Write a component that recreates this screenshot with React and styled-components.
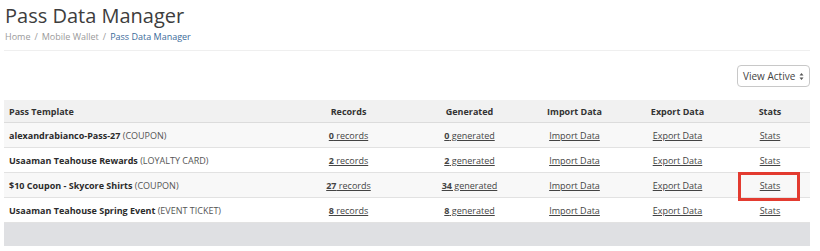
import React from "react";
import styled, { createGlobalStyle } from "styled-components";

const GlobalStyle = createGlobalStyle`
  body {
    margin: 0;
    background: #fff;
    font-family: "Open Sans", "Liberation Sans", sans-serif;
    color: #333;
  }
`;

const Page = styled.div`
  width: 806px;
  padding: 0 10px 0 4px;
`;

const Header = styled.div`
  padding: 0 0 7px 1px;
  border-bottom: 1px solid #efefef;
`;

const Title = styled.h1`
  margin: 0;
  padding-top: 2px;
  font-size: 20px;
  font-weight: 400;
  line-height: 27px;
  color: #3d3d3d;
`;

const Crumbs = styled.div`
  display: flex;
  gap: 4px;
  padding-top: 1px;
  font-size: 9px;
  line-height: 13px;
  color: #9a9a9a;
`;

const Crumb = styled.span`
  color: ${(p) => (p.$active ? "#3b6b9a" : "#9a9a9a")};
`;

const Toolbar = styled.div`
  display: flex;
  justify-content: flex-end;
  padding: 14px 0 13px;
`;

const Select = styled.div`
  display: flex;
  align-items: center;
  justify-content: space-between;
  box-sizing: border-box;
  width: 73px;
  height: 22px;
  padding: 0 5px 0 5px;
  border: 1px solid #c8c8c8;
  border-radius: 4px;
  font-size: 10px;
  color: #444;
`;

const Table = styled.table`
  width: 100%;
  border-collapse: collapse;
  font-size: 9px;
  table-layout: fixed;
`;

const Th = styled.th`
  height: 22px;
  padding: 0 5px;
  font-weight: 700;
  text-align: ${(p) => (p.$left ? "left" : "center")};
  background: #f1f1f1;
  border-bottom: 1px solid #dcdcdc;
  color: #333;
`;

const Row = styled.tr`
  background: ${(p) => (p.$striped ? "#f8f8f8" : "#fff")};
`;

const Td = styled.td`
  height: 24px;
  padding: 0 5px;
  text-align: ${(p) => (p.$left ? "left" : "center")};
  border-bottom: 1px solid #e2e2e2;
  position: relative;
`;

const Name = styled.b`
  font-weight: 700;
  color: #2b2b2b;
`;

const Kind = styled.span`
  color: #555;
`;

const Link = styled.a`
  color: #444;
  text-decoration: underline;
  b {
    font-weight: 700;
  }
`;

const Highlight = styled.span`
  position: absolute;
  left: 8px;
  right: 10px;
  top: -1px;
  bottom: -4px;
  border: 3px solid #e33b30;
`;

const Footer = styled.div`
  height: 23px;
  background: #dfe0e3;
`;

const rows = [
  { name: "alexandrabianco-Pass-27", kind: "COUPON", records: 0, generated: 0 },
  { name: "Usaaman Teahouse Rewards", kind: "LOYALTY CARD", records: 2, generated: 2 },
  { name: "$10 Coupon - Skycore Shirts", kind: "COUPON", records: 27, generated: 34, mark: true },
  { name: "Usaaman Teahouse Spring Event", kind: "EVENT TICKET", records: 8, generated: 8 },
];

export default function App() {
  return (
    <>
      <GlobalStyle />
      <Page>
        <Header>
          <Title>Pass Data Manager</Title>
          <Crumbs>
            <Crumb>Home</Crumb>
            <span>/</span>
            <Crumb>Mobile Wallet</Crumb>
            <span>/</span>
            <Crumb $active>Pass Data Manager</Crumb>
          </Crumbs>
        </Header>
        <Toolbar>
          <Select>
            <span>View Active</span>
            <svg width="5" height="9" viewBox="0 0 5 9">
              <path d="M0.5 3.5 L2.5 1 L4.5 3.5 Z M0.5 5.5 L2.5 8 L4.5 5.5 Z" fill="#555" />
            </svg>
          </Select>
        </Toolbar>
        <Table>
          <colgroup>
            <col style={{ width: 278 }} />
            <col style={{ width: 133 }} />
            <col style={{ width: 109 }} />
            <col style={{ width: 101 }} />
            <col style={{ width: 105 }} />
            <col style={{ width: 80 }} />
          </colgroup>
          <thead>
            <tr>
              <Th $left>Pass Template</Th>
              <Th>Records</Th>
              <Th>Generated</Th>
              <Th>Import Data</Th>
              <Th>Export Data</Th>
              <Th>Stats</Th>
            </tr>
          </thead>
          <tbody>
            {rows.map((r, i) => (
              <Row key={r.name} $striped={i % 2 === 0}>
                <Td $left>
                  <Name>{r.name}</Name> <Kind>({r.kind})</Kind>
                </Td>
                <Td>
                  <Link><b>{r.records}</b> records</Link>
                </Td>
                <Td>
                  <Link><b>{r.generated}</b> generated</Link>
                </Td>
                <Td>
                  <Link>Import Data</Link>
                </Td>
                <Td>
                  <Link>Export Data</Link>
                </Td>
                <Td>
                  <Link>Stats</Link>
                  {r.mark && <Highlight />}
                </Td>
              </Row>
            ))}
          </tbody>
        </Table>
        <Footer />
      </Page>
    </>
  );
}
